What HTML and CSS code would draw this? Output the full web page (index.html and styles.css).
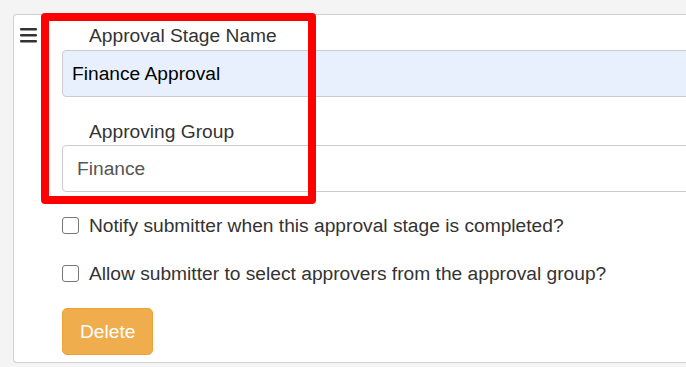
FILE: index.html
```html
<!DOCTYPE html>
<html lang="en">
<head>
  <meta charset="UTF-8" />
  <title>Approval Stage</title>
  <link rel="stylesheet" href="styles.css">
</head>
<body>

  <div class="card">
    <div class="handle">
      <svg viewBox="0 0 17 15" width="17" height="15">
        <rect x="0" y="0" width="17" height="2.6" rx="1"/>
        <rect x="0" y="6" width="17" height="2.6" rx="1"/>
        <rect x="0" y="12" width="17" height="2.6" rx="1"/>
      </svg>
    </div>

    <div class="stage-form">
      <label class="field-label" for="stageName">Approval Stage Name</label>
      <input class="field autofilled" id="stageName" type="text" value="Finance Approval">

      <label class="field-label second">Approving Group</label>
      <div class="field select">Finance</div>

      <label class="check-row">
        <input type="checkbox" class="check">
        Notify submitter when this approval stage is completed?
      </label>
      <label class="check-row">
        <input type="checkbox" class="check">
        Allow submitter to select approvers from the approval group?
      </label>

      <button class="btn-warning">Delete</button>
    </div>
  </div>

  <div class="highlight"></div>

</body>
</html>
```

FILE: styles.css
```css
body {
  font-family: 'Liberation Sans', Arial, sans-serif;
  font-size: 19.2px;
  line-height: 1.2;
  margin: 0;
  padding: 0;
  background: #f4f4f4;
  color: #333;
  overflow: hidden;
}

.card {
  display: flex;
  margin: 14px 0 0 13px;
  padding: 9px 0 7px 6px;
  background: #fff;
  border: 1px solid #cfcfcf;
  border-right: none;
  border-radius: 4px 0 0 4px;
  overflow: hidden;
}

.handle {
  width: 42px;
  padding-top: 4px;
}

.handle svg {
  display: block;
  fill: #333;
}

.stage-form {
  flex: 1;
  display: flex;
  flex-direction: column;
  margin-right: -10px;
}

.field-label {
  display: block;
  padding-left: 27px;
  margin-bottom: 3px;
}

.field-label.second {
  margin-top: 23px;
  margin-bottom: 2px;
}

.field {
  box-sizing: border-box;
  height: 47px;
  width: 100%;
  margin: 0;
  border: 1px solid #ccc;
  border-radius: 4px;
  font-family: inherit;
  font-size: 19.2px;
  line-height: 1.2;
  background: #fff;
}

.field.autofilled {
  padding: 0 9px;
  background: #e8f0fe;
  color: #000;
  outline: none;
}

.field.select {
  display: flex;
  align-items: center;
  padding: 0 14px;
  color: #555;
}

.check-row {
  display: flex;
  align-items: center;
  margin-top: 22px;
}

.check-row + .check-row {
  margin-top: 25px;
}

.check {
  appearance: none;
  box-sizing: border-box;
  width: 17px;
  height: 17px;
  margin: 0 10px 0 0;
  border: 1.5px solid #777;
  border-radius: 3px;
  background: #fff;
}

.btn-warning {
  align-self: flex-start;
  box-sizing: border-box;
  height: 47px;
  margin-top: 23px;
  padding: 0 17px;
  font-family: inherit;
  font-size: 19.2px;
  color: #fff;
  background: #f0ad4e;
  border: 1px solid #eea236;
  border-radius: 5px;
}

.highlight {
  position: absolute;
  left: 41px;
  top: 13px;
  width: 259px;
  height: 175px;
  border: 8px solid #ff0000;
  border-radius: 4px;
  pointer-events: none;
}
```
